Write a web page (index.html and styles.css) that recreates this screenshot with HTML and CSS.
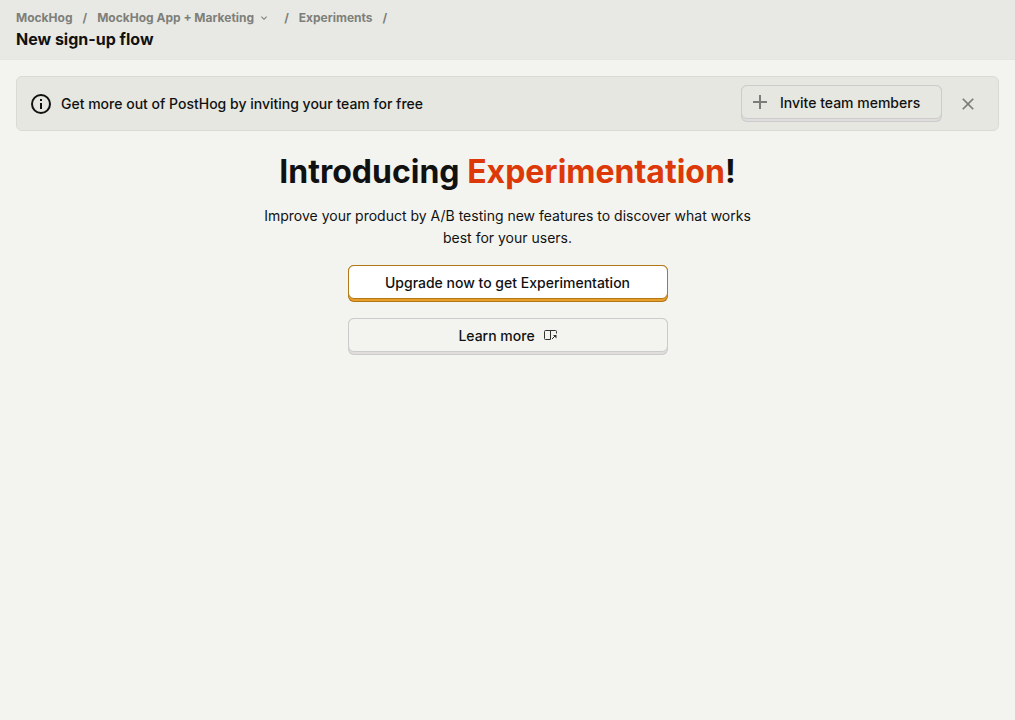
FILE: index.html
```html
<!DOCTYPE html>
<html lang="en">
<head>
<meta charset="utf-8">
<title>New sign-up flow</title>
<link rel="stylesheet" href="styles.css">
</head>
<body>
<header class="topbar">
  <nav class="crumbs" aria-label="Breadcrumb">
    <a href="#">MockHog</a><span>/</span>
    <button class="crumb-button" type="button">MockHog App + Marketing
      <svg width="12" height="12" viewBox="0 0 24 24" fill="currentColor" aria-hidden="true"><path d="M7.400 8.600 12 13.200l4.600-4.600L18 10l-6 6-6-6z"/></svg>
    </button><span>/</span>
    <a href="#">Experiments</a><span>/</span>
  </nav>
  <h1 class="page-title">New sign-up flow</h1>
</header>
<main class="content">
  <section class="banner">
    <svg class="banner-icon" width="24" height="24" viewBox="0 0 24 24" fill="currentColor" aria-hidden="true"><path d="M11 7h2v2h-2zm0 4h2v6h-2zm1-9a10 10 0 1 0 0 20 10 10 0 0 0 0-20zm0 18a8 8 0 1 1 0-16 8 8 0 0 1 0 16z"/></svg>
    <p class="banner-text">Get more out of PostHog by inviting your team for free</p>
    <button class="button button-invite" type="button">
      <span class="face"><svg class="muted" width="24" height="24" viewBox="0 0 24 24" fill="currentColor" aria-hidden="true"><path d="M19 13h-6v6h-2v-6H5v-2h6V5h2v6h6z"/></svg><span class="label">Invite team members</span></span>
    </button>
    <button class="close" type="button" aria-label="Close"><svg width="20" height="20" viewBox="0 0 24 24" fill="currentColor" aria-hidden="true"><path d="M19 6.400 17.600 5 12 10.600 6.400 5 5 6.400l5.600 5.600L5 17.600 6.400 19l5.600-5.600 5.600 5.600 1.400-1.400-5.600-5.600z"/></svg></button>
  </section>
  <section class="intro">
    <h2 class="headline">Introducing <span class="accent">Experimentation</span>!</h2>
    <p class="lede">Improve your product by A/B testing new features to discover what works best for your users.</p>
    <div class="actions">
      <button class="button button-primary" type="button"><span class="face"><span class="label">Upgrade now to get Experimentation</span></span></button>
      <a class="button" href="#"><span class="face"><span class="label">Learn more</span>
        <svg class="open-icon" width="14" height="14" viewBox="0 0 14 14" fill="none" stroke="currentColor" aria-hidden="true"><path d="M7.500 11.500h-5a1 1 0 0 1-1-1v-7a1 1 0 0 1 1-1h10a1 1 0 0 1 1 1v2M7.500 2.500v9M9 11l3-3"/><path d="M10 7h3.500v3.500z" fill="currentColor" stroke="none"/></svg></span></a>
    </div>
  </section>
</main>
</body>
</html>
```
FILE: styles.css
```css
* { box-sizing: border-box; }
body {
  margin: 0;
  background: #f3f4ef;
  color: #111;
  font: 14px/20px Inter, sans-serif;
}
h1, h2, p { margin: 0; }
a { color: inherit; text-decoration: none; }
button { font: inherit; color: inherit; padding: 0; border: 0; background: none; cursor: pointer; }
svg { flex: none; }
.topbar {
  padding: 8px 16px;
  min-height: 60px;
  background: #e8e9e4;
  border-bottom: 1px solid #e5e6e0;
}
.crumbs {
  display: flex;
  align-items: center;
  gap: 10px;
  font-size: 12px;
  font-weight: 700;
  color: #7e7f7a;
}
.crumb-button { display: flex; align-items: center; gap: 4px; padding-right: 4px; }
.page-title { font-size: 16px; line-height: 22px; font-weight: 700; }
.content { padding: 16px; }
.banner {
  display: flex;
  align-items: center;
  padding: 8px 12px;
  background: #e5e7e0;
  border: 1px solid #dadbd5;
  border-radius: 6px;
}
.banner-text { flex: 1; margin-left: 8px; font-weight: 500; }
.muted, .close { color: #7c7d79; }
.close { display: flex; margin-left: 8px; padding: 8px; }
.button {
  display: flex;
  padding-bottom: 2px;
  border: 1px solid #cccccc;
  border-top-width: 0;
  border-radius: 6px;
  background: #e0dddc;
  font-weight: 500;
}
.face {
  display: flex;
  flex: 1;
  align-items: center;
  justify-content: center;
  gap: 8px;
  height: 34px;
  margin: 0 -1px;
  background: #f3f4ef;
  border: 1px solid #cccccc;
  border-radius: 6px;
}
.label { padding-top: 2px; }
.button-invite { min-width: 201px; }
.button-invite .face { justify-content: flex-start; padding: 0 12px 0 6px; background: #e5e7e0; }
.button-primary { border-color: #b17816; background: #eb9d2a; }
.button-primary .face { border-color: #b17816; background: #fff; }
.open-icon { color: #333; }
.intro { margin-top: 16px; text-align: center; }
.headline { font-size: 32px; line-height: 50px; font-weight: 700; }
.accent { color: #dd3808; }
.lede { max-width: 512px; margin: 8px auto 0; line-height: 22px; }
.actions { display: flex; flex-direction: column; gap: 16px; max-width: 320px; margin: 16px auto 0; }
```
